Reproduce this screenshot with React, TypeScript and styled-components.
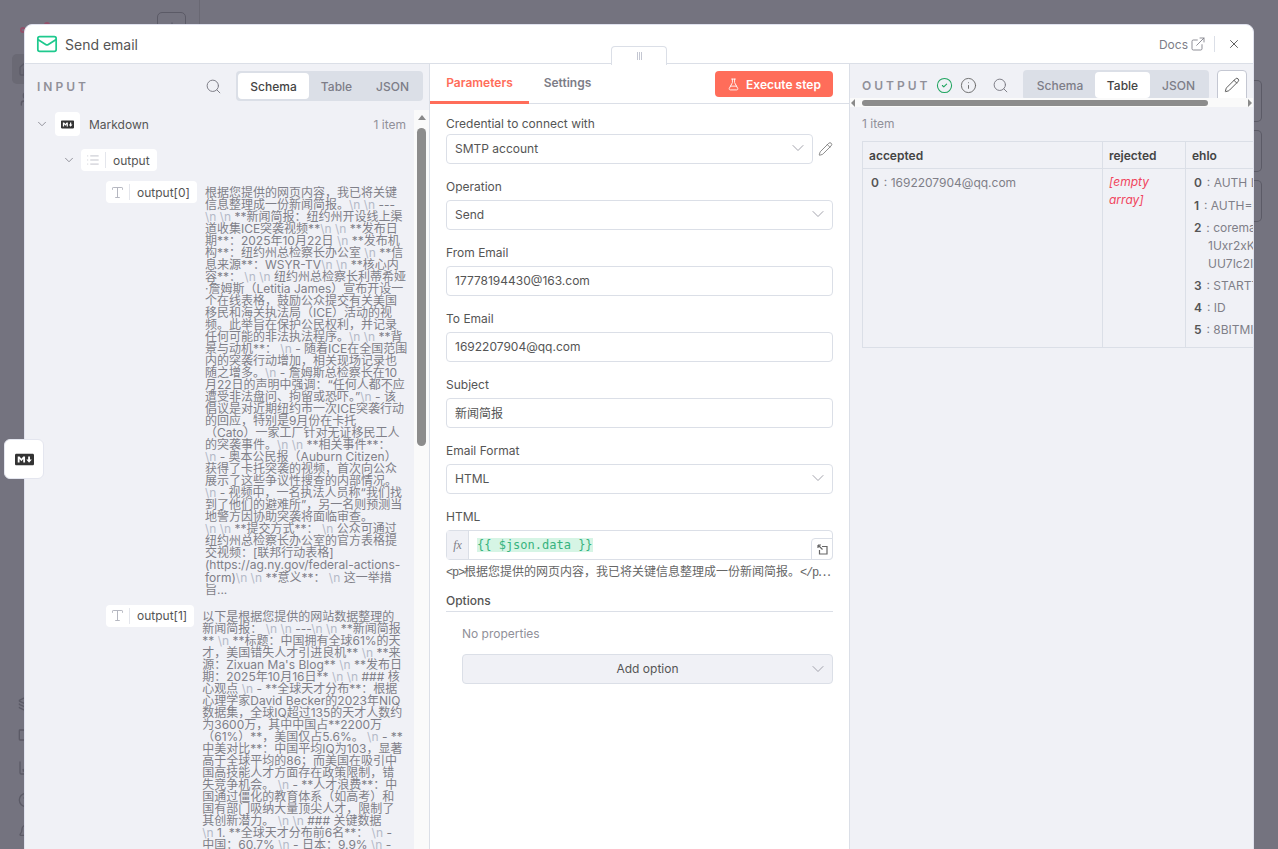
import React from "react";
import styled, { createGlobalStyle } from "styled-components";
import {
  ChevronDown, CircleCheck, ExternalLink, FlaskConical, Home, Info, List, Mail,
  Pencil, Plus, Search, Type, User, X, BookOpen, CircleHelp, BarChart3, Bell, Layers,
} from "lucide-react";
import { FaMarkdown } from "react-icons/fa";

const Global = createGlobalStyle`
  html, body { margin: 0; padding: 0; height: 100%; overflow: hidden; }
  body { font-family: Inter, "Noto Sans CJK SC", sans-serif; color: #555; }
  * { box-sizing: border-box; }
`;

const Page = styled.div`
  position: relative;
  width: 100%;
  height: 100vh;
  overflow: hidden;
  background: #74737f;
  display: flex;
  justify-content: space-between;
`;
const Sidebar = styled.div`
  width: 200px;
  border-right: 1px solid #696873;
  padding: 12px 12px 0;
  display: flex;
  flex-direction: column;
  color: #5b5a66;
`;
const SideTop = styled.div`
  display: flex;
  justify-content: space-between;
  align-items: flex-start;
  height: 42px;
`;
const Dots = styled.div`
  display: flex;
  align-items: flex-start;
  gap: 18px;
  margin-left: 8px;
  color: #93506a;
`;
const Dot = styled.span<{ $top: string }>`
  width: 6px;
  height: 6px;
  margin-top: ${(p) => p.$top};
  border: 2px solid currentColor;
  border-radius: 50%;
`;
const AddBox = styled.div`
  width: 29px;
  height: 30px;
  margin-right: 1px;
  border: 1px solid #5b5a66;
  border-radius: 5px;
  display: flex;
  align-items: center;
  justify-content: center;
`;
const SideItem = styled.div<{ $active?: boolean }>`
  width: 100%;
  height: 30px;
  display: flex;
  align-items: center;
  padding-left: 6px;
  border-radius: 5px;
  background: ${(p) => (p.$active ? "#6a6974" : "transparent")};
`;
const SideFill = styled.div`
  flex: 1;
`;
const SideBottom = styled.div`
  display: flex;
  flex-direction: column;
  gap: 16px;
  padding-left: 6px;
  margin-bottom: 9px;
`;
const GhostColumn = styled.div`
  display: flex;
  flex-direction: column;
  gap: 8px;
  padding-top: 80px;
  margin-right: 16px;
`;
const GhostBox = styled.div`
  width: 8px;
  height: 42px;
  border: 1px solid #5b5a66;
  border-left: none;
  border-radius: 0 5px 5px 0;
`;

const Modal = styled.div`
  position: absolute;
  left: 24px;
  right: 24px;
  top: 24px;
  height: 840px;
  background: #fff;
  border: 1px solid #e0e2ee;
  border-radius: 8px;
  overflow: hidden;
  display: flex;
  flex-direction: column;
`;
const ModalHeader = styled.header`
  height: 39px;
  flex: none;
  display: flex;
  align-items: center;
  padding: 0 12px 0 11px;
  border-bottom: 1px solid #dbdfe7;
  color: #555;
`;
const Title = styled.span`
  font-size: 14px;
  margin-left: 7px;
  color: #555;
`;
const Docs = styled.span`
  margin-left: auto;
  display: flex;
  align-items: center;
  gap: 2px;
  font-size: 12px;
  color: #7d7d87;
`;
const Divider = styled.span`
  width: 1px;
  height: 16px;
  background: #dbdfe7;
  margin: 0 12px 0 8px;
`;
const Close = styled.span`
  display: flex;
  color: #555;
`;
const Columns = styled.div`
  flex: 1;
  min-height: 0;
  display: flex;
`;
const InputPanel = styled.section`
  width: 405px;
  flex: none;
  background: #f0f1f6;
  display: flex;
  flex-direction: column;
  border-right: 1px solid #dbdfe7;
`;
const PanelHeader = styled.div`
  height: 46px;
  flex: none;
  display: flex;
  align-items: center;
  padding: 0 6px 2px 12px;
`;
const PanelTitle = styled.span`
  font-size: 12px;
  font-weight: 600;
  letter-spacing: 3px;
  color: #909099;
`;
const SearchSlot = styled.span`
  margin-left: auto;
  display: flex;
  color: #7d7d87;
`;
const Tabs = styled.div<{ $ml: string }>`
  margin-left: ${(p) => p.$ml};
  display: flex;
  height: 30px;
  flex: none;
  padding: 2px;
  border-radius: 4px;
  background: #dbdfe7;
`;
const Tab = styled.span<{ $active?: boolean; $w: string }>`
  width: ${(p) => p.$w};
  display: flex;
  align-items: center;
  justify-content: center;
  border-radius: 4px;
  font-size: 12px;
  font-weight: 500;
  background: ${(p) => (p.$active ? "#fff" : "transparent")};
  color: ${(p) => (p.$active ? "#444" : "#7d7d87")};
`;
const InputBody = styled.div`
  flex: 1;
  min-height: 0;
  display: flex;
`;
const Tree = styled.div`
  flex: 1;
  min-width: 0;
  overflow: hidden;
  padding-top: 2px;
`;
const NodeRow = styled.div`
  display: flex;
  align-items: center;
  height: 24px;
  padding: 0 8px 0 10px;
  font-size: 12px;
`;
const Chevron = styled.span`
  display: flex;
  color: #7d7d87;
`;
const NodeBox = styled.span`
  width: 25px;
  height: 24px;
  margin-left: 6px;
  background: #fff;
  border-radius: 4px;
  display: flex;
  align-items: center;
  justify-content: center;
  color: #333;
`;
const NodeName = styled.span`
  margin-left: 9px;
  color: #555;
`;
const ItemCount = styled.span`
  margin-left: auto;
  color: #909099;
`;
const OutputRow = styled.div`
  display: flex;
  align-items: center;
  gap: 5px;
  margin: 13px 0 10px 37px;
`;
const Pill = styled.span`
  display: inline-flex;
  align-items: center;
  height: 22px;
  flex: none;
  background: #fff;
  border-radius: 4px;
  font-size: 12px;
  color: #555;
  padding-right: 7px;
`;
const PillIcon = styled.span<{ $w: string }>`
  width: ${(p) => p.$w};
  height: 16px;
  display: flex;
  align-items: center;
  justify-content: center;
  border-right: 1px solid #e4e6ec;
  color: #b5b7c0;
  margin-right: 7px;
`;
const ItemRow = styled.div`
  display: flex;
  align-items: flex-start;
  gap: 8px;
  padding-left: 81px;
  margin-bottom: 9px;
`;
const ItemText = styled.div`
  margin-top: 6px;
  font-size: 12px;
  line-height: 12.03px;
  color: #7f7f88;
  white-space: nowrap;
`;
const TextLine = styled.div`
  height: 12.03px;
`;
const Esc = styled.span`
  color: #b4bac8;
`;
const VScroll = styled.div`
  width: 15px;
  flex: none;
  background: #fafafa;
  display: flex;
  flex-direction: column;
  align-items: center;
  padding-top: 5px;
`;
const ArrowUp = styled.span`
  border-left: 4px solid transparent;
  border-right: 4px solid transparent;
  border-bottom: 5px solid #8a8a8a;
`;
const VThumb = styled.span`
  width: 9px;
  height: 318px;
  margin-top: 8px;
  background: #8c8c8c;
  border-radius: 5px;
`;

const CenterPanel = styled.section`
  width: 420px;
  flex: none;
  background: #fff;
  border-right: 1px solid #dbdfe7;
  display: flex;
  flex-direction: column;
`;
const ParamTabs = styled.div`
  height: 40px;
  flex: none;
  display: flex;
  border-bottom: 1px solid #dbdfe7;
  padding-right: 16px;
`;
const ParamTab = styled.span<{ $active?: boolean; $w: string }>`
  width: ${(p) => p.$w};
  height: 40px;
  padding-bottom: 1px;
  display: flex;
  align-items: center;
  justify-content: center;
  font-size: 12px;
  font-weight: 600;
  color: ${(p) => (p.$active ? "#ff6d5a" : "#7d7d87")};
  border-bottom: 3px solid ${(p) => (p.$active ? "#ff6d5a" : "transparent")};
`;
const ExecuteButton = styled.span`
  margin: 7px 0 0 auto;
  height: 26px;
  width: 118px;
  display: flex;
  align-items: center;
  justify-content: center;
  gap: 6px;
  border-radius: 4px;
  background: #ff6d5a;
  color: #fff;
  font-size: 12px;
  font-weight: 600;
`;
const Form = styled.div`
  padding: 13px 16px 0;
  display: flex;
  flex-direction: column;
  gap: 16px;
`;
const Field = styled.div``;
const Label = styled.div<{ $mb?: string }>`
  font-size: 12px;
  line-height: 14px;
  margin-bottom: ${(p) => p.$mb || "6px"};
  color: #555;
`;
const Row = styled.div`
  display: flex;
  align-items: center;
  gap: 5px;
`;
const Input = styled.div`
  flex: 1;
  height: 30px;
  display: flex;
  align-items: center;
  justify-content: space-between;
  padding: 0 4px 2px 8px;
  border: 1px solid #dbdfe7;
  border-radius: 4px;
  background: #fff;
  font-size: 12px;
  color: #555;
`;
const PencilSlot = styled.span`
  width: 15px;
  display: flex;
  color: #666;
`;
const ExprBox = styled.div`
  position: relative;
  height: 30px;
  display: flex;
  border: 1px solid #dbdfe7;
  border-radius: 4px;
  background: #fff;
`;
const Fx = styled.span`
  width: 22px;
  display: flex;
  align-items: center;
  justify-content: center;
  background: #f0f1f6;
  border-right: 1px solid #dbdfe7;
  font: italic 12px "Liberation Serif", serif;
  color: #7d7d87;
`;
const Expr = styled.span`
  margin: 7px 0 0 8px;
  align-self: flex-start;
  height: 14px;
  font: 500 12px/14px "DejaVu Sans Mono", monospace;
  color: #36b37e;
  background: #d6f5e5;
`;
const ExpandBtn = styled.span`
  position: absolute;
  right: -1px;
  bottom: -1px;
  width: 22px;
  height: 22px;
  display: flex;
  align-items: center;
  justify-content: center;
  background: #fff;
  border: 1px solid #dbdfe7;
  border-radius: 4px 0 4px 0;
  color: #666;
`;
const Hint = styled.div`
  margin-top: 4px;
  font: 12px/14px "Noto Sans CJK SC", sans-serif;
  color: #666;
  white-space: nowrap;
  overflow: hidden;
`;
const HintLatin = styled.span`
  font: 12px/14px "Liberation Mono", monospace;
  letter-spacing: -1.2px;
`;
const OptionsTitle = styled.div`
  margin-top: -2px;
  padding-bottom: 3px;
  border-bottom: 1px solid #dbdfe7;
  font-size: 12px;
  line-height: 14px;
  font-weight: 500;
  color: #555;
`;
const OptionsBody = styled.div`
  padding: 15px 0 0 16px;
`;
const NoProps = styled.div`
  font-size: 12px;
  line-height: 14px;
  color: #909099;
  margin-bottom: 13px;
`;
const AddOption = styled.div`
  position: relative;
  height: 30px;
  padding-bottom: 2px;
  display: flex;
  align-items: center;
  justify-content: center;
  background: #f0f1f6;
  border: 1px solid #dbdfe7;
  border-radius: 4px;
  font-size: 12px;
  color: #555;
`;
const AddChevron = styled.span`
  position: absolute;
  right: 4px;
  top: 4px;
  display: flex;
`;

const OutputPanel = styled.section`
  flex: 1;
  min-width: 0;
  background: #f0f1f6;
  display: flex;
  flex-direction: column;
`;
const OutputHeader = styled.div`
  height: 34px;
  flex: none;
  overflow: hidden;
  display: flex;
  align-items: flex-start;
  padding: 6px 6px 0 12px;
`;
const OutputTitleSlot = styled.span`
  height: 30px;
  display: flex;
  align-items: center;
  gap: 6px;
`;
const StatusIcon = styled.span<{ $c: string; $ml?: string }>`
  display: flex;
  margin-left: ${(p) => p.$ml || "0"};
  color: ${(p) => p.$c};
`;
const SearchBox = styled.span`
  height: 30px;
  display: flex;
  align-items: center;
  margin-left: 15px;
  color: #7d7d87;
`;
const EditBtn = styled.span`
  width: 30px;
  height: 34px;
  margin-left: 8px;
  flex: none;
  display: flex;
  align-items: center;
  justify-content: center;
  padding-bottom: 4px;
  background: #fff;
  border: 1px solid #c4c7d2;
  border-radius: 4px;
  color: #444;
`;
const HScroll = styled.div`
  height: 9px;
  flex: none;
  background: #fafafa;
  display: flex;
  align-items: center;
  padding: 0 1px;
`;
const ArrowSide = styled.span<{ $right?: boolean }>`
  border-top: 4px solid transparent;
  border-bottom: 4px solid transparent;
  ${(p) => (p.$right ? "border-left: 4px solid #8a8a8a;" : "border-right: 4px solid #8a8a8a;")}
`;
const HThumb = styled.span`
  width: 346px;
  height: 6px;
  margin: 0 auto 0 7px;
  background: #8c8c8c;
  border-radius: 3px;
`;
const OutputBody = styled.div`
  flex: 1;
  min-height: 0;
  overflow: hidden;
  padding: 10px 0 0 12px;
`;
const OutCount = styled.div`
  font-size: 12px;
  line-height: 14px;
  color: #909099;
  margin-bottom: 10px;
`;
const Table = styled.table`
  border-collapse: collapse;
  table-layout: fixed;
  width: 563px;
  font-size: 12px;
  color: #7f7f88;
`;
const Th = styled.th<{ $w: string }>`
  width: ${(p) => p.$w};
  height: 27px;
  padding: 0 6px;
  text-align: left;
  font-weight: 600;
  color: #444;
  border: 1px solid #dbdfe7;
`;
const Td = styled.td`
  height: 179px;
  padding: 3px 8px 0;
  vertical-align: top;
  border: 1px solid #dbdfe7;
`;
const Empty = styled.div`
  margin: 1px -2px;
  font-style: italic;
  color: #f0455e;
  line-height: 18px;
`;
const KV = styled.div`
  padding: 2px 0;
  line-height: 18px;
  &:first-child {
    padding-bottom: 3px;
  }
`;
const Key = styled.b`
  font-weight: 600;
  color: #555;
  margin-right: 1.5px;
`;
const Cont = styled.div`
  padding-left: 14px;
  white-space: nowrap;
`;
const Handle = styled.div`
  position: absolute;
  left: 586px;
  top: 21px;
  width: 56px;
  height: 19px;
  background: #fff;
  border: 1px solid #dbdfe7;
  border-bottom: none;
  border-radius: 4px 4px 0 0;
  display: flex;
  align-items: center;
  justify-content: center;
  gap: 1px;
`;
const Grip = styled.span`
  width: 1px;
  height: 8px;
  background: #c4c7d2;
`;
const FloatingNode = styled.div`
  position: absolute;
  left: 4px;
  top: 439px;
  width: 40px;
  height: 40px;
  background: #fff;
  border: 1px solid #e4e6ef;
  border-radius: 6px;
  display: flex;
  align-items: center;
  justify-content: center;
  color: #333;
`;

const out0 = [
  "根据您提供的网页内容，我已将关键",
  "信息整理成一份新闻简报。\\n \\n ---",
  "\\n \\n **新闻简报：纽约州开设线上渠",
  "道收集ICE突袭视频**\\n \\n **发布日",
  "期**：2025年10月22日 \\n **发布机",
  "构**：纽约州总检察长办公室 \\n **信",
  "息来源**：WSYR-TV\\n \\n **核心内",
  "容**： \\n \\n 纽约州总检察长利蒂希娅",
  "·詹姆斯（Letitia James）宣布开设一",
  "个在线表格，鼓励公众提交有关美国",
  "移民和海关执法局（ICE）活动的视",
  "频。此举旨在保护公民权利，并记录",
  "任何可能的非法执法程序。\\n \\n **背",
  "景与动机**： \\n - 随着ICE在全国范围",
  "内的突袭行动增加，相关现场记录也",
  "随之增多。\\n - 詹姆斯总检察长在10",
  "月22日的声明中强调：“任何人都不应",
  "遭受非法盘问、拘留或恐吓。”\\n - 该",
  "倡议是对近期纽约市一次ICE突袭行动",
  "的回应，特别是9月份在卡托",
  "（Cato）一家工厂针对无证移民工人",
  "的突袭事件。\\n \\n **相关事件**：",
  "\\n - 奥本公民报（Auburn Citizen）",
  "获得了卡托突袭的视频，首次向公众",
  "展示了这些争议性搜查的内部情况。",
  "\\n - 视频中，一名执法人员称“我们找",
  "到了他们的避难所”，另一名则预测当",
  "地警方因协助突袭将面临审查。",
  "\\n \\n **提交方式**： \\n 公众可通过",
  "纽约州总检察长办公室的官方表格提",
  "交视频：[联邦行动表格]",
  "(https://ag.ny.gov/federal-actions-",
  "form)\\n \\n **意义**： \\n 这一举措",
  "旨...",
];
const out1 = [
  "以下是根据您提供的网站数据整理的",
  "新闻简报： \\n \\n ---\\n \\n **新闻简报",
  "** \\n **标题：中国拥有全球61%的天",
  "才，美国错失人才引进良机** \\n **来",
  "源：Zixuan Ma's Blog** \\n **发布日",
  "期：2025年10月16日** \\n \\n ### 核",
  "心观点 \\n - **全球天才分布**：根据",
  "心理学家David Becker的2023年NIQ",
  "数据集，全球IQ超过135的天才人数约",
  "为3600万，其中中国占**2200万",
  "（61%）**，美国仅占5.6%。 \\n - **",
  "中美对比**：中国平均IQ为103，显著",
  "高于全球平均的86；而美国在吸引中",
  "国高技能人才方面存在政策限制，错",
  "失竞争机会。 \\n - **人才浪费**：中",
  "国通过僵化的教育体系（如高考）和",
  "国有部门吸纳大量顶尖人才，限制了",
  "其创新潜力。 \\n \\n ### 关键数据",
  "\\n 1. **全球天才分布前6名**： \\n -",
  "中国：60.7% \\n - 日本：9.9% \\n -",
];

function Line({ text }: { text: string }) {
  const parts = text.split("\\n");
  return (
    <TextLine>
      {parts.map((p, i) => (
        <React.Fragment key={i}>
          {i > 0 && <Esc>\n</Esc>}
          {p}
        </React.Fragment>
      ))}
    </TextLine>
  );
}

const Chev = () => <ChevronDown size={20} strokeWidth={1.1} color="#9a9aa4" />;

const ExpandIcon = () => (
  <svg width="11" height="11" viewBox="0 0 11 11" fill="none" stroke="currentColor" strokeWidth="1.2">
    <path d="M5 2.5h5v7.5H2.5V6" />
    <path d="M1 1l4.5 4.5M1 1h3M1 1v3" />
  </svg>
);

export default function App() {
  return (
    <Page>
      <Global />
      <Sidebar>
        <SideTop>
          <Dots><Dot $top="15px" /><Dot $top="10px" /></Dots>
          <AddBox><Plus size={14} /></AddBox>
        </SideTop>
        <SideItem $active><Home size={16} /></SideItem>
        <SideItem><User size={16} /></SideItem>
        <SideFill />
        <SideBottom>
          <Layers size={16} />
          <BookOpen size={16} />
          <BarChart3 size={16} />
          <CircleHelp size={16} />
          <Bell size={16} />
        </SideBottom>
      </Sidebar>
      <GhostColumn>
        <GhostBox />
        <GhostBox />
        <GhostBox />
      </GhostColumn>
      <Modal>
        <ModalHeader>
          <Mail size={22} color="#1fc98e" strokeWidth={1.9} />
          <Title>Send email</Title>
          <Docs>Docs <ExternalLink size={16} strokeWidth={1.3} /></Docs>
          <Divider />
          <Close><X size={14} strokeWidth={1.6} /></Close>
        </ModalHeader>
        <Columns>
          <InputPanel>
            <PanelHeader>
              <PanelTitle>INPUT</PanelTitle>
              <SearchSlot><Search size={17} strokeWidth={1.4} /></SearchSlot>
              <Tabs $ml="14px">
                <Tab $active $w="71px">Schema</Tab>
                <Tab $w="55px">Table</Tab>
                <Tab $w="57px">JSON</Tab>
              </Tabs>
            </PanelHeader>
            <InputBody>
              <Tree>
                <NodeRow>
                  <Chevron><ChevronDown size={14} strokeWidth={1.4} /></Chevron>
                  <NodeBox><FaMarkdown size={13} /></NodeBox>
                  <NodeName>Markdown</NodeName>
                  <ItemCount>1 item</ItemCount>
                </NodeRow>
                <OutputRow>
                  <Chevron><ChevronDown size={14} strokeWidth={1.4} /></Chevron>
                  <Pill>
                    <PillIcon $w="25px"><List size={14} strokeWidth={1.4} /></PillIcon>output
                  </Pill>
                </OutputRow>
                <ItemRow>
                  <Pill><PillIcon $w="24px"><Type size={15} strokeWidth={1.6} /></PillIcon>output[0]</Pill>
                  <ItemText>{out0.map((l, i) => <Line key={i} text={l} />)}</ItemText>
                </ItemRow>
                <ItemRow>
                  <Pill><PillIcon $w="24px"><Type size={15} strokeWidth={1.6} /></PillIcon>output[1]</Pill>
                  <ItemText>{out1.map((l, i) => <Line key={i} text={l} />)}</ItemText>
                </ItemRow>
              </Tree>
              <VScroll><ArrowUp /><VThumb /></VScroll>
            </InputBody>
          </InputPanel>
          <CenterPanel>
            <ParamTabs>
              <ParamTab $active $w="99px">Parameters</ParamTab>
              <ParamTab $w="77px">Settings</ParamTab>
              <ExecuteButton><FlaskConical size={13} strokeWidth={1.6} />Execute step</ExecuteButton>
            </ParamTabs>
            <Form>
              <Field>
                <Label $mb="3px">Credential to connect with</Label>
                <Row>
                  <Input>SMTP account <Chev /></Input>
                  <PencilSlot><Pencil size={16} strokeWidth={1.2} /></PencilSlot>
                </Row>
              </Field>
              <Field><Label>Operation</Label><Input>Send <Chev /></Input></Field>
              <Field><Label>From Email</Label><Input>17778194430@163.com</Input></Field>
              <Field><Label>To Email</Label><Input>1692207904@qq.com</Input></Field>
              <Field><Label>Subject</Label><Input>新闻简报</Input></Field>
              <Field><Label>Email Format</Label><Input>HTML <Chev /></Input></Field>
              <Field>
                <Label>HTML</Label>
                <ExprBox>
                  <Fx>fx</Fx>
                  <Expr>{"{{ $json.data }}"}</Expr>
                  <ExpandBtn><ExpandIcon /></ExpandBtn>
                </ExprBox>
                <Hint><HintLatin>&lt;p&gt;</HintLatin>根据您提供的网页内容，我已将关键信息整理成一份新闻简报。<HintLatin>&lt;/p</HintLatin>⋯</Hint>
              </Field>
              <Field>
                <OptionsTitle>Options</OptionsTitle>
                <OptionsBody>
                  <NoProps>No properties</NoProps>
                  <AddOption>Add option<AddChevron><Chev /></AddChevron></AddOption>
                </OptionsBody>
              </Field>
            </Form>
          </CenterPanel>
          <OutputPanel>
            <OutputHeader>
              <OutputTitleSlot>
                <PanelTitle>OUTPUT</PanelTitle>
                <StatusIcon $c="#20a560"><CircleCheck size={17} strokeWidth={1.5} /></StatusIcon>
                <StatusIcon $c="#666" $ml="1px"><Info size={17} strokeWidth={1.3} /></StatusIcon>
              </OutputTitleSlot>
              <SearchBox><Search size={17} strokeWidth={1.4} /></SearchBox>
              <Tabs $ml="auto">
                <Tab $w="70px">Schema</Tab>
                <Tab $active $w="55px">Table</Tab>
                <Tab $w="57px">JSON</Tab>
              </Tabs>
              <EditBtn><Pencil size={16} strokeWidth={1.3} /></EditBtn>
            </OutputHeader>
            <HScroll><ArrowSide /><HThumb /><ArrowSide $right /></HScroll>
            <OutputBody>
              <OutCount>1 item</OutCount>
              <Table>
                <thead>
                  <tr>
                    <Th $w="240px">accepted</Th>
                    <Th $w="83px">rejected</Th>
                    <Th $w="240px">ehlo</Th>
                  </tr>
                </thead>
                <tbody>
                  <tr>
                    <Td><KV><Key>0</Key> : 1692207904@qq.com</KV></Td>
                    <Td><Empty>[empty array]</Empty></Td>
                    <Td>
                      <KV><Key>0</Key> : AUTH LOGIN PLAIN</KV>
                      <KV><Key>1</Key> : AUTH=LOGIN PLAIN</KV>
                      <KV><Key>2</Key> : coremail<Cont>1Uxr2xKj7kG0xkI17xGrU7I0s8FY2U3Uj8</Cont><Cont>UU7Ic2I0Y2UFRbmXhUCa0xDrUUUUj</Cont></KV>
                      <KV><Key>3</Key> : STARTTLS</KV>
                      <KV><Key>4</Key> : ID</KV>
                      <KV><Key>5</Key> : 8BITMIME</KV>
                    </Td>
                  </tr>
                </tbody>
              </Table>
            </OutputBody>
          </OutputPanel>
        </Columns>
        <Handle><Grip /><Grip /><Grip /></Handle>
      </Modal>
      <FloatingNode><FaMarkdown size={19} /></FloatingNode>
    </Page>
  );
}
